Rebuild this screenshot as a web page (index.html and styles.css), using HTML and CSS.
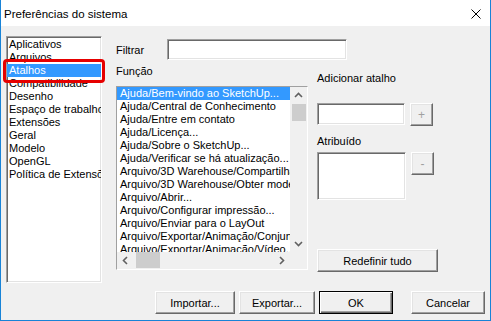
FILE: index.html
```html
<!DOCTYPE html>
<html lang="pt">

<head>
    <meta charset="UTF-8">
    <title>Preferências do sistema</title>
    <link rel="stylesheet" href="styles.css">
</head>

<body>
    <div class="window">
        <div class="titlebar">
            <span class="title">Preferências do sistema</span>
            <svg class="close" width="10" height="10" viewBox="0 0 10 10">
                <path d="M0.5 0.5 L9.5 9.5 M9.5 0.5 L0.5 9.5" stroke="#000" stroke-width="1" fill="none" />
            </svg>
        </div>

        <div class="main">
            <ul class="pages">
                <li>Aplicativos</li>
                <li>Arquivos</li>
                <li class="sel">Atalhos</li>
                <li>Compatibilidade</li>
                <li>Desenho</li>
                <li>Espaço de trabalho</li>
                <li>Extensões</li>
                <li>Geral</li>
                <li>Modelo</li>
                <li>OpenGL</li>
                <li>Política de Extensões</li>
            </ul>

            <div class="center">
                <div class="filter-row">
                    <label class="filter-label" for="filter">Filtrar</label>
                    <input class="field filter-input" type="text" id="filter">
                </div>

                <div class="lower">
                    <div class="func-col">
                        <div class="label func-label">Função</div>
                        <div class="flist">
                            <ul class="rows">
                                <li class="sel">Ajuda/Bem-vindo ao SketchUp...</li>
                                <li>Ajuda/Central de Conhecimento</li>
                                <li>Ajuda/Entre em contato</li>
                                <li>Ajuda/Licença...</li>
                                <li>Ajuda/Sobre o SketchUp...</li>
                                <li>Ajuda/Verificar se há atualização...</li>
                                <li>Arquivo/3D Warehouse/Compartilhar modelo...</li>
                                <li>Arquivo/3D Warehouse/Obter modelos...</li>
                                <li>Arquivo/Abrir...</li>
                                <li>Arquivo/Configurar impressão...</li>
                                <li>Arquivo/Enviar para o LayOut</li>
                                <li>Arquivo/Exportar/Animação/Conjunto de imagens...</li>
                                <li>Arquivo/Exportar/Animação/Vídeo...</li>
                            </ul>
                            <div class="vscroll">
                                <div class="sbtn">
                                    <svg width="17" height="17" viewBox="0 0 17 17">
                                        <path d="M5 10 L8.5 6.5 L12 10" stroke="#606060" stroke-width="1.6" fill="none" />
                                    </svg>
                                </div>
                                <div class="vthumb"></div>
                                <div class="track"></div>
                                <div class="sbtn">
                                    <svg width="17" height="17" viewBox="0 0 17 17">
                                        <path d="M5 7 L8.5 10.5 L12 7" stroke="#606060" stroke-width="1.6" fill="none" />
                                    </svg>
                                </div>
                            </div>
                            <div class="hscroll">
                                <div class="sbtn">
                                    <svg width="17" height="17" viewBox="0 0 17 17">
                                        <path d="M10 5 L6.5 8.5 L10 12" stroke="#606060" stroke-width="1.6" fill="none" />
                                    </svg>
                                </div>
                                <div class="hthumb"></div>
                                <div class="track"></div>
                                <div class="sbtn">
                                    <svg width="17" height="17" viewBox="0 0 17 17">
                                        <path d="M7 5 L10.5 8.5 L7 12" stroke="#606060" stroke-width="1.6" fill="none" />
                                    </svg>
                                </div>
                            </div>
                            <div class="corner"></div>
                        </div>
                    </div>

                    <div class="side-col">
                        <div class="label">Adicionar atalho</div>
                        <div class="add-row">
                            <input class="field add-input" type="text">
                            <button class="btn small" disabled>+</button>
                        </div>
                        <div class="label assigned-label">Atribuído</div>
                        <div class="assigned-row">
                            <div class="field assigned-list"></div>
                            <button class="btn small" disabled>-</button>
                        </div>
                        <button class="btn reset">Redefinir tudo</button>
                    </div>
                </div>
            </div>
        </div>

        <div class="footer">
            <button class="btn import">Importar...</button>
            <button class="btn export">Exportar...</button>
            <button class="btn ok">OK</button>
            <button class="btn cancel">Cancelar</button>
        </div>
    </div>
</body>

</html>
```

FILE: styles.css
```css
body {
    margin: 0;
    font-family: "Liberation Sans", Arial, sans-serif;
    font-size: 11px;
    color: #000;
    background-color: #f0f0f0;
}

.window {
    width: 491px;
    height: 321px;
    box-sizing: border-box;
    border: 1px solid #1883d7;
    border-top: none;
    background-color: #f0f0f0;
    display: flex;
    flex-direction: column;
}

.titlebar {
    height: 26px;
    flex: none;
    background-color: #fff;
    display: flex;
    align-items: center;
    justify-content: space-between;
    padding-left: 3px;
    padding-right: 9px;
}

.title {
    font-size: 11.5px;
    margin-top: 1px;
}

.close {
    margin-top: 1px;
}

.main {
    flex: 1;
    display: flex;
    align-items: flex-start;
    padding: 10px 0 0 5px;
}

/* sunken 3D edge used by lists and text boxes */
.field,
.pages,
.flist {
    background-color: #fff;
    border: 1px solid;
    border-color: #a0a0a0 #fff #fff #a0a0a0;
    box-shadow: inset 1px 1px #696969, inset -1px -1px #e3e3e3;
    box-sizing: border-box;
}

.pages {
    list-style: none;
    margin: 0;
    padding: 1px 0 0 0;
    width: 96px;
    height: 247px;
}

.pages li {
    height: 13px;
    line-height: 13px;
    padding-left: 2px;
    white-space: nowrap;
    overflow: hidden;
}

.pages li.sel {
    position: relative;
    overflow: visible;
    background-color: #3399ff;
    color: #fff;
}

/* red highlight drawn over the list */
.pages li.sel::after {
    content: "";
    position: absolute;
    top: -5px;
    bottom: -6px;
    left: -4px;
    right: -4px;
    border: 3px solid #e60000;
    border-radius: 4px;
}

.center {
    margin-left: 14px;
    display: flex;
    flex-direction: column;
}

.filter-row {
    display: flex;
    align-items: center;
    margin-top: 3px;
    height: 21px;
}

.filter-label {
    width: 51px;
}

.filter-input {
    width: 180px;
    height: 21px;
    margin: 0;
    padding: 0;
}

.lower {
    display: flex;
    align-items: flex-start;
}

.label {
    height: 13px;
    line-height: 13px;
    white-space: nowrap;
}

.func-label {
    margin-top: 5px;
}

.flist {
    margin-top: 8px;
    width: 192px;
    height: 184px;
    display: grid;
    grid-template-columns: 173px 17px;
    grid-template-rows: 165px 17px;
    padding: 0;
}

.rows {
    list-style: none;
    margin: 0;
    padding: 0;
    overflow: hidden;
    background-color: #fff;
}

.rows li {
    height: 13px;
    line-height: 13px;
    padding-left: 3px;
    white-space: nowrap;
}

.rows li.sel {
    background-color: #3399ff;
    color: #fff;
}

.vscroll {
    background-color: #f0f0f0;
    display: flex;
    flex-direction: column;
}

.hscroll {
    background-color: #f0f0f0;
    display: flex;
}

.sbtn {
    width: 17px;
    height: 17px;
    flex: none;
}

.sbtn svg {
    display: block;
}

.track {
    flex: 1;
}

.vthumb {
    height: 17px;
    margin: 0 1px 0 2px;
    background-color: #cdcdcd;
}

.hthumb {
    width: 24px;
    margin: 0 0 1px 2px;
    background-color: #cdcdcd;
}

.corner {
    background-color: #f0f0f0;
}

.side-col {
    margin-left: 9px;
    padding-top: 12px;
    display: flex;
    flex-direction: column;
}

.add-row {
    display: flex;
    margin-top: 18px;
}

.add-input {
    width: 88px;
    height: 22px;
    margin: 0 5px 0 0;
    padding: 0;
}

.assigned-label {
    margin-top: 9px;
}

.assigned-row {
    display: flex;
    align-items: flex-start;
    margin-top: 4px;
}

.assigned-list {
    width: 89px;
    height: 48px;
    margin-right: 5px;
}

/* classic raised button */
.btn {
    font-family: "Liberation Sans", Arial, sans-serif;
    font-size: 11px;
    color: #000;
    background-color: #f0f0f0;
    border: 1px solid;
    border-color: #fff #696969 #696969 #fff;
    box-shadow: inset -1px -1px #a0a0a0, inset 1px 1px #e3e3e3;
    height: 23px;
    padding: 0;
    margin: 0;
    box-sizing: border-box;
}

.btn.small {
    width: 23px;
    height: 23px;
    color: #a0a0a0;
    font-size: 12px;
}

.reset {
    width: 121px;
    margin-top: 49px;
}

.footer {
    flex: none;
    display: flex;
    justify-content: flex-end;
    padding: 0 5px 6px 0;
}

.import {
    width: 80px;
}

.export {
    width: 76px;
    margin-left: 4px;
}

.ok {
    width: 74px;
    margin-left: 4px;
    border-color: #000;
    box-shadow: inset 1px 1px #fff, inset -1px -1px #696969, inset -2px -2px #a0a0a0;
}

.cancel {
    width: 74px;
    margin-left: 18px;
}
```
